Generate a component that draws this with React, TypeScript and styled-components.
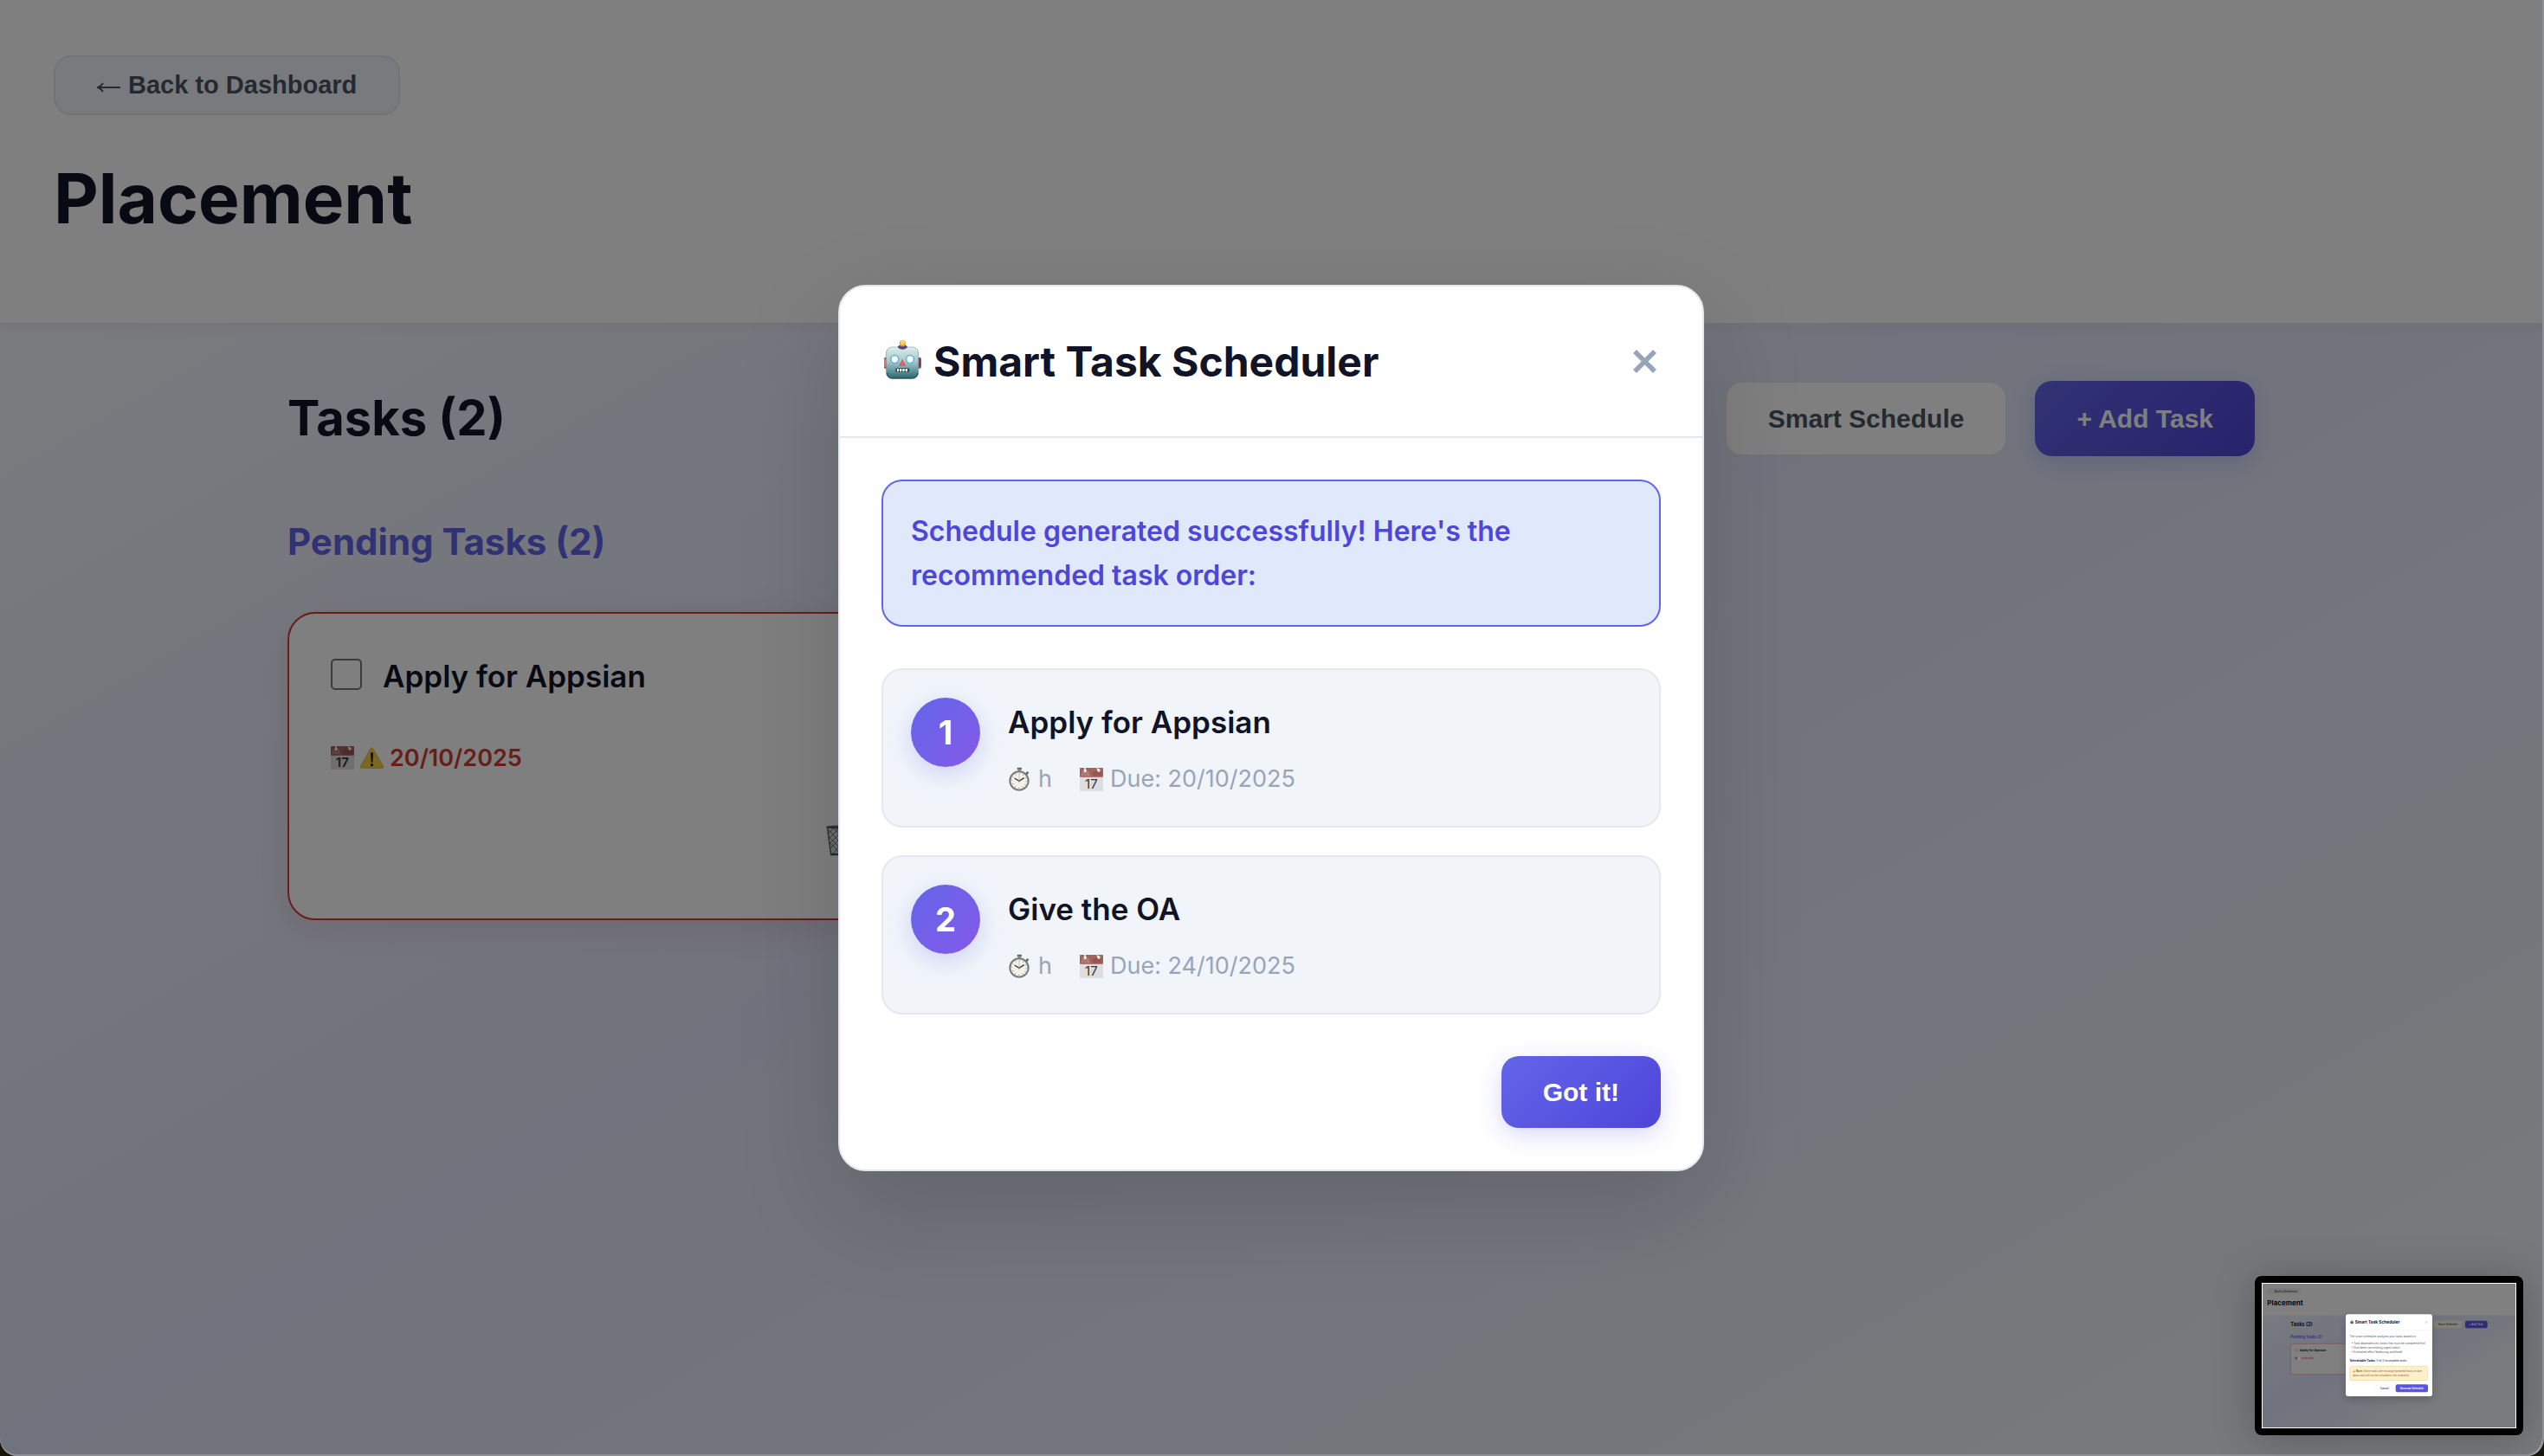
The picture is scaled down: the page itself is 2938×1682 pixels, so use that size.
import React from "react";
import styled, { createGlobalStyle, css } from "styled-components";

const c = {
  ink: "#111427",
  slate: "#4b5563",
  muted: "#98a4b8",
  line: "#e3e8ef",
  soft: "#f1f5fa",
  primary: "#6365e9",
  primaryDark: "#4e45da",
  violet: "#855ae8",
  danger: "#cf3a31",
};

const ui = `Inter, "Noto Sans", sans-serif`;
const control = `"Liberation Sans", Arial, sans-serif`;

const GlobalStyle = createGlobalStyle`
  *, *::before, *::after { box-sizing: border-box; }
  body { margin: 0; background: #17140a; font-family: ${ui}; color: ${c.ink}; }
  h1, h2, h3, p, ul, ol { margin: 0; padding: 0; }
  svg { display: block; flex: none; }
`;

const Window = styled.div`
  position: relative;
  min-height: 100vh;
  overflow: hidden;
  border-right: 2px solid #8d8f95;
  border-radius: 0 0 20px 20px;
  background: linear-gradient(to bottom right, #f8fafc 0%, #e1e6fb 50%, #f3f5f8 100%);
`;

const Header = styled.header`
  position: relative;
  padding: 64px 62px 80px;
  background: #fff;
  border-bottom: 1px solid ${c.line};
  box-shadow: 0 2px 16px rgba(15, 23, 42, 0.06);
`;

const PageTitle = styled.h1`
  margin-top: 32px;
  font-size: 80px;
  line-height: 128px;
  font-weight: 700;
`;

const buttonBase = css`
  display: inline-flex;
  align-items: center;
  justify-content: center;
  gap: 8px;
  border: 0;
  font-family: ${control};
  font-weight: 700;
  cursor: pointer;
`;

const BackButton = styled.button`
  ${buttonBase}
  padding: 16px 48px;
  border: 2px solid ${c.line};
  border-radius: 20px;
  background: ${c.soft};
  color: ${c.slate};
  font-size: 29px;
  line-height: 33px;
`;

const Button = styled.button<{ $primary?: boolean }>`
  ${buttonBase}
  padding: 24px 48px;
  border-radius: 20px;
  font-size: 30px;
  line-height: 35px;
  ${(p) =>
    p.$primary
      ? css`
          background: linear-gradient(135deg, ${c.primary}, ${c.primaryDark});
          color: #fff;
          box-shadow: 0 8px 28px rgba(99, 102, 241, 0.25);
        `
      : css`
          border: 2px solid ${c.line};
          background: #fff;
          color: ${c.slate};
        `}
`;

const Main = styled.main`
  max-width: 2400px;
  margin: 0 auto;
  padding: 64px;
`;

const SectionBar = styled.div`
  display: flex;
  align-items: center;
  justify-content: space-between;
`;

const SectionTitle = styled.h2`
  font-size: 56px;
  line-height: 90px;
  font-weight: 700;
`;

const Actions = styled.div`
  display: flex;
  gap: 32px;
`;

const GroupTitle = styled.h3`
  margin: 64px 0 48px;
  font-size: 42px;
  line-height: 67px;
  font-weight: 700;
  color: ${c.primary};
`;

const Grid = styled.ul`
  display: grid;
  grid-template-columns: repeat(3, 1fr);
  gap: 32px;
  list-style: none;
`;

const Card = styled.li`
  padding: 48px;
  border: 2px solid ${c.danger};
  border-radius: 32px;
  background: #fff;
  box-shadow: 0 8px 40px rgba(160, 40, 60, 0.14);
`;

const CardHead = styled.label`
  display: flex;
  align-items: flex-start;
  gap: 24px;
  font-size: 35px;
  line-height: 49px;
  font-weight: 600;
`;

const Tick = styled.input`
  appearance: none;
  width: 36px;
  height: 36px;
  margin: 4px 0 0;
  border: 2px solid #767676;
  border-radius: 5px;
  background: #fff;
`;

const Overdue = styled.p`
  display: flex;
  align-items: center;
  gap: 7px;
  margin: 48px 0 32px;
  font-size: 27px;
  line-height: 43px;
  font-weight: 600;
  color: ${c.danger};
`;

const CardFoot = styled.div`
  display: flex;
  justify-content: flex-end;
`;

const IconButton = styled.button`
  padding: 24px 28px;
  border: 0;
  background: transparent;
  cursor: pointer;
`;

const Overlay = styled.div`
  position: absolute;
  inset: 0;
  display: flex;
  align-items: center;
  justify-content: center;
  background: rgba(0, 0, 0, 0.5);
  box-shadow: inset 0 -2px 0 #8d8f95;
  border-radius: 0 0 20px 20px;
`;

const Modal = styled.section`
  width: 100%;
  max-width: 1000px;
  border: 2px solid ${c.line};
  border-radius: 32px;
  background: #fff;
  box-shadow: 0 40px 120px rgba(0, 0, 0, 0.15);
`;

const ModalHead = styled.div`
  display: flex;
  align-items: center;
  justify-content: space-between;
  padding: 48px;
  border-bottom: 2px solid ${c.line};
`;

const ModalTitle = styled.h2`
  display: flex;
  align-items: center;
  gap: 12px;
  font-size: 48px;
  line-height: 77px;
  font-weight: 700;
`;

const Close = styled.button`
  padding: 4px;
  border: 0;
  background: transparent;
  cursor: pointer;
`;

const ModalBody = styled.div`
  display: flex;
  flex-direction: column;
  gap: 48px;
  padding: 48px;
`;

const Notice = styled.p`
  padding: 32px;
  border: 2px solid ${c.primary};
  border-radius: 24px;
  background: #dfe9fb;
  color: ${c.primaryDark};
  font-size: 32px;
  line-height: 51px;
  font-weight: 600;
`;

const Steps = styled.ol`
  display: flex;
  flex-direction: column;
  gap: 32px;
  list-style: none;
`;

const Step = styled.li`
  display: flex;
  align-items: flex-start;
  gap: 32px;
  padding: 32px;
  border: 2px solid ${c.line};
  border-radius: 24px;
  background: ${c.soft};
`;

const Rank = styled.span`
  display: flex;
  flex: none;
  align-items: center;
  justify-content: center;
  width: 80px;
  height: 80px;
  border-radius: 50%;
  background: linear-gradient(135deg, ${c.primary}, ${c.violet});
  box-shadow: 0 8px 28px rgba(99, 102, 241, 0.25);
  color: #fff;
  font-size: 38px;
  font-weight: 700;
`;

const StepTitle = styled.h3`
  margin-bottom: 16px;
  font-size: 35px;
  line-height: 56px;
  font-weight: 600;
`;

const Meta = styled.div`
  display: flex;
  gap: 32px;
  font-size: 27px;
  line-height: 44px;
  color: ${c.muted};
`;

const MetaItem = styled.span`
  display: flex;
  align-items: center;
  gap: 8px;
`;

const ModalFoot = styled.div`
  display: flex;
  justify-content: flex-end;
`;

const Preview = styled.figure`
  position: absolute;
  right: 22px;
  bottom: 24px;
  margin: 0;
  padding: 8px;
  border-radius: 8px;
  background: #000;
  box-shadow: 0 4px 48px rgba(0, 0, 0, 0.25);
`;

const Shot = styled.svg`
  border: 1px solid #fff;
  font-family: ${ui};
`;

const BackArrow = () => (
  <svg width="28" height="24" viewBox="0 0 28 24" fill="none" stroke="currentColor" strokeWidth="2" aria-hidden="true">
    <path d="M1 14H27" />
    <path d="M7 9C5.500 11.500 4 13 1 14C4 15 5.500 16.500 7 19" />
  </svg>
);

const Robot = () => (
  <svg width="48" height="54" viewBox="0 0 144 162" aria-hidden="true">
    <defs>
      <linearGradient id="face" x1="0" y1="0" x2="0" y2="1">
        <stop offset="0" stopColor="#d9ebe9" />
        <stop offset="0.45" stopColor="#a9c9cc" />
        <stop offset="0.75" stopColor="#5f979f" />
        <stop offset="1" stopColor="#2c626d" />
      </linearGradient>
      <radialGradient id="bulb" cx="0.5" cy="0.35" r="0.6">
        <stop offset="0" stopColor="#fff3a6" />
        <stop offset="0.6" stopColor="#f5b840" />
        <stop offset="1" stopColor="#dd8a22" />
      </radialGradient>
    </defs>
    <rect x="9" y="66" width="14" height="38" rx="4" fill="#b23a38" />
    <rect x="123" y="66" width="14" height="38" rx="4" fill="#b23a38" />
    <rect x="10" y="70" width="4" height="28" rx="2" fill="#ee8f88" />
    <rect x="132" y="70" width="4" height="28" rx="2" fill="#7d2327" />
    <rect x="16" y="30" width="112" height="109" rx="21" fill="url(#face)" stroke="#6f999b" strokeWidth="2" />
    <path d="M19 120q2 18 19 18h68q17 0 19-18" fill="none" stroke="#174854" strokeWidth="3" />
    <path d="M27 38q6-5 14-5h60q9 0 15 5" fill="none" stroke="#f1faf8" strokeWidth="3" opacity=".7" />
    <path d="M56 31q2-9 17-9t17 9q-5 7-17 7t-17-7z" fill="#5c4180" />
    <circle cx="73" cy="17" r="11" fill="url(#bulb)" />
    <circle cx="46" cy="72" r="16" fill="#5eb6d9" />
    <circle cx="99" cy="72" r="16" fill="#5eb6d9" />
    <circle cx="46" cy="72" r="11" fill="#fbffff" />
    <circle cx="99" cy="72" r="11" fill="#fbffff" />
    <path d="M72.500 73L83 94H62z" fill="#e1655c" stroke="#b94a48" strokeWidth="1.500" />
    <rect x="49" y="103" width="48" height="14" rx="6" fill="#27414a" />
    <path d="M54 105h6v10h-6zM63 105h7v10h-7zM73 105h7v10h-7zM83 105h7v10h-7z" fill="#fff" />
  </svg>
);

const Calendar = () => (
  <svg width="27" height="27" viewBox="0 0 81 81" aria-hidden="true">
    <rect width="81" height="81" rx="2" fill="#dedede" />
    <rect width="81" height="32" rx="2" fill="#a5625f" />
    <rect x="44" y="12" width="32" height="16" fill="#985653" />
    <path d="M16 0h5v6a5 5 0 1 1-5 0zM58 0l8 4a5 5 0 1 1-5 5z" fill="#fff" />
    <text x="4" y="28" fontSize="17" fill="#d3aead" fontFamily={ui}>JUL</text>
    <text x="40" y="72" fontSize="45" textAnchor="middle" fill="#333" fontFamily={ui}>17</text>
  </svg>
);

const Stopwatch = () => (
  <svg width="27" height="28" viewBox="0 0 81 84" aria-hidden="true">
    <rect x="32" y="2" width="16" height="8" rx="3" fill="#59666d" />
    <rect x="35" y="8" width="10" height="9" fill="#899499" />
    <path d="M60 22l8-7 5 6-8 7z" fill="#59666d" />
    <circle cx="39" cy="48" r="32" fill="#f3f1ea" stroke="#777b77" strokeWidth="6" />
    <circle cx="39" cy="48" r="25" fill="none" stroke="#55524e" strokeWidth="4" strokeDasharray="1.500 11.590" />
    <path d="M23 39l16 10 17-11" fill="none" stroke="#333" strokeWidth="4" />
    <path d="M39 56V24" stroke="#d59b90" strokeWidth="2" />
  </svg>
);

const Warning = () => (
  <svg width="27" height="27" viewBox="0 0 81 81" aria-hidden="true">
    <path d="M36 8q4-6 8 0l36 62q2 6-5 6H6q-7 0-5-6z" fill="#f6cf45" stroke="#d9a52c" strokeWidth="2" />
    <path d="M36 24q5-5 9 0l-2 32h-5z" fill="#221a08" />
    <circle cx="40.500" cy="65" r="5" fill="#221a08" />
  </svg>
);

const Trash = () => (
  <svg width="36" height="36" viewBox="0 0 36 36" fill="none" aria-hidden="true">
    <path d="M1 3h34l-4 31H5z" fill="#d9dddf" />
    <g stroke="#4d5659" strokeWidth="0.8">
      <path d="M3 6l26 28M3 13l20 21M5 21l12 13M8 3l23 24M14 3l18 19M20 3l13 13M27 3l6 7" />
      <path d="M33 6L7 34M33 13L13 34M31 21L19 34M28 3L5 27M22 3L4 22M16 3L3 16M9 3L3 10" />
    </g>
    <ellipse cx="18" cy="2.500" rx="17.500" ry="1.500" fill="#5b656b" stroke="#3f5566" />
    <path d="M5 34h26" stroke="#3f5566" strokeWidth="2.500" />
    <path d="M1.500 3l4 31M34.500 3l-4 31" stroke="#5b656b" strokeWidth="1.500" />
  </svg>
);

const Thumbnail = () => (
  <Shot width="294" height="168" viewBox="0 0 876 498" role="img" aria-label="Previous step of the scheduler">
    <defs>
      <linearGradient id="shotBg" x1="0" y1="0" x2="1" y2="1">
        <stop offset="0" stopColor="#7b7d80" />
        <stop offset="0.45" stopColor="#70737f" />
        <stop offset="0.75" stopColor="#7a7b7d" />
      </linearGradient>
      <filter id="lift" x="-20%" y="-20%" width="140%" height="150%">
        <feDropShadow dx="0" dy="12" stdDeviation="16" floodOpacity="0.18" />
      </filter>
    </defs>
    <rect width="876" height="498" fill="url(#shotBg)" />
    <rect width="876" height="109" fill="#808080" />
    <rect x="16" y="15" width="119" height="21" rx="6" fill="#797a7c" />
    <g fontWeight="700" fill="#090b17">
      <text x="31" y="29" fontSize="8.600" fill="#2c3038" fontFamily={control}>← Back to Dashboard</text>
      <text x="16" y="74" fontSize="24">Placement</text>
      <text x="97" y="147" fontSize="17">Tasks (2)</text>
      <text x="97" y="189" fontSize="12.500" fill="#343580">Pending Tasks (2)</text>
    </g>
    <rect x="97" y="208" width="214" height="106" rx="9" fill="#808080" stroke="#8a3a3a" strokeWidth="1.500" />
    <rect x="113" y="225" width="10" height="10" rx="2" fill="none" stroke="#555" />
    <text x="129" y="234" fontSize="10.500" fontWeight="600" fill="#090b17">Apply for Appsian</text>
    <rect x="112" y="254" width="8" height="8" fill="#5f4a4a" />
    <path d="M127 254l4 8h-8z" fill="#b29a35" />
    <text x="133" y="261" fontSize="8" fontWeight="600" fill="#76221d">20/10/2025</text>
    <rect x="285" y="282" width="8" height="10" fill="#6b6e70" />
    <rect x="592" y="128" width="100" height="26" rx="6" fill="#808080" stroke="#96733f" strokeWidth="2" />
    <rect x="702" y="128" width="77" height="26" rx="6" fill="#2f2d78" />
    <g fontSize="9" fontWeight="700" textAnchor="middle" fontFamily={control}>
      <text x="642" y="144" fill="#2c3038">Smart Schedule</text>
      <text x="740" y="144" fill="#8a8a92">+ Add Task</text>
    </g>
    <rect x="288" y="106" width="300" height="284" rx="9" fill="#fff" filter="url(#lift)" />
    <rect x="304" y="130" width="11" height="9" rx="3" fill="#45727c" />
    <circle cx="309.500" cy="128" r="2" fill="#b08750" />
    <text x="320" y="138" fontSize="14.500" fontWeight="700" fill={c.ink}>Smart Task Scheduler</text>
    <path d="M564 130l7 7M571 130l-7 7" stroke="#98a4b8" strokeWidth="1.500" />
    <path d="M288 160h300" stroke={c.line} />
    <g fontSize="9.500" fill="#4b5563">
      <text x="302" y="185">The smart scheduler analyzes your tasks based on:</text>
      <text x="308" y="210">• Task dependencies (tasks that must be completed first)</text>
      <text x="308" y="226">• Due dates (prioritizing urgent tasks)</text>
      <text x="308" y="241">• Estimated effort (balancing workload)</text>
      <text x="302" y="271" fill={c.ink}><tspan fontWeight="700">Schedulable Tasks:</tspan> 0 of 2 incomplete tasks</text>
    </g>
    <rect x="302" y="286" width="270" height="49" rx="6" fill="#fdf1cb" stroke="#f3d890" strokeWidth="2" />
    <path d="M317 299l5 8h-10z" fill="#e5a52c" />
    <g fontSize="9" fill="#93582a">
      <text x="324" y="306"><tspan fontWeight="700">Note:</tspan> Some tasks are missing estimated hours or due</text>
      <text x="312" y="320">dates and will not be included in the schedule.</text>
    </g>
    <rect x="392" y="350" width="59" height="25" rx="6" fill="#fff" stroke="#eef1f5" />
    <rect x="461" y="349" width="112" height="27" rx="6" fill="#5855e2" />
    <g fontSize="9" fontWeight="700" textAnchor="middle" fontFamily={control}>
      <text x="422" y="365" fill="#4b5563">Cancel</text>
      <text x="517" y="365" fill="#fff">Generate Schedule</text>
    </g>
  </Shot>
);

const schedule = [
  { name: "Apply for Appsian", due: "20/10/2025" },
  { name: "Give the OA", due: "24/10/2025" },
];

export default function App() {
  return (
    <>
      <GlobalStyle />
      <Window>
        <Header>
          <BackButton type="button">
            <BackArrow />
            Back to Dashboard
          </BackButton>
          <PageTitle>Placement</PageTitle>
        </Header>
        <Main>
          <SectionBar>
            <SectionTitle>Tasks (2)</SectionTitle>
            <Actions>
              <Button type="button">Smart Schedule</Button>
              <Button type="button" $primary>+ Add Task</Button>
            </Actions>
          </SectionBar>
          <GroupTitle>Pending Tasks (2)</GroupTitle>
          <Grid>
            <Card>
              <CardHead>
                <Tick type="checkbox" />
                Apply for Appsian
              </CardHead>
              <Overdue>
                <Calendar />
                <Warning />
                20/10/2025
              </Overdue>
              <CardFoot>
                <IconButton type="button" aria-label="Delete task">
                  <Trash />
                </IconButton>
              </CardFoot>
            </Card>
          </Grid>
        </Main>
        <Overlay>
          <Modal role="dialog" aria-modal="true" aria-labelledby="scheduler-title">
            <ModalHead>
              <ModalTitle id="scheduler-title">
                <Robot />
                Smart Task Scheduler
              </ModalTitle>
              <Close type="button" aria-label="Close">
                <svg width="29" height="29" viewBox="0 0 29 29" stroke={c.muted} strokeWidth="5.500" aria-hidden="true">
                  <path d="M3 3L26 26M26 3L3 26" />
                </svg>
              </Close>
            </ModalHead>
            <ModalBody>
              <Notice>Schedule generated successfully! Here's the recommended task order:</Notice>
              <Steps>
                {schedule.map((task, i) => (
                  <Step key={task.name}>
                    <Rank>{i + 1}</Rank>
                    <div>
                      <StepTitle>{task.name}</StepTitle>
                      <Meta>
                        <MetaItem><Stopwatch />h</MetaItem>
                        <MetaItem><Calendar />Due: {task.due}</MetaItem>
                      </Meta>
                    </div>
                  </Step>
                ))}
              </Steps>
              <ModalFoot>
                <Button type="button" $primary>Got it!</Button>
              </ModalFoot>
            </ModalBody>
          </Modal>
        </Overlay>
        <Preview>
          <Thumbnail />
        </Preview>
      </Window>
    </>
  );
}
